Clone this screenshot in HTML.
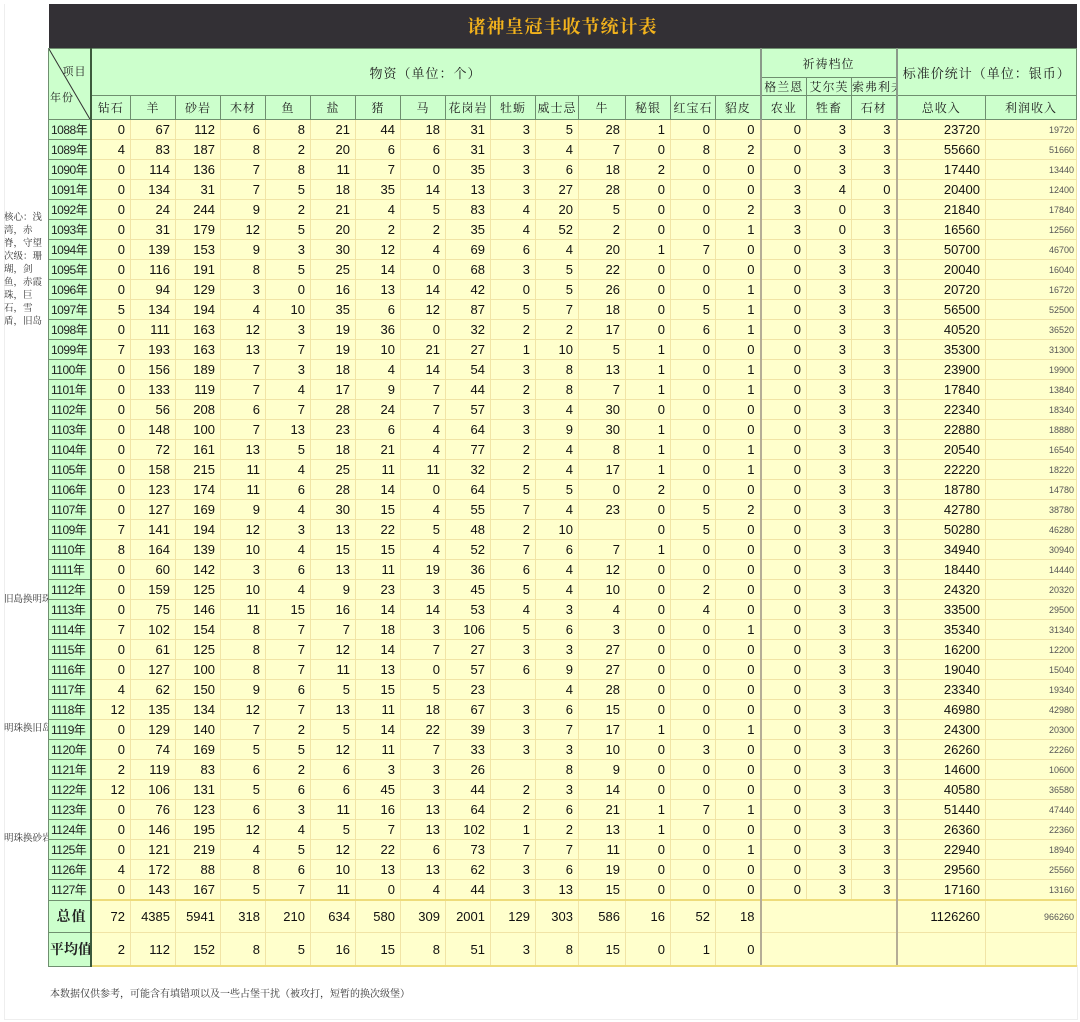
<!DOCTYPE html>
<html><head><meta charset="utf-8">
<style>
html,body{margin:0;padding:0;background:#fff;width:1080px;height:1022px;overflow:hidden;position:relative}
.note{position:absolute;left:4px;width:43px;font:9.5px/13px "Liberation Serif","Noto Serif CJK SC",serif;color:#333;white-space:normal;z-index:0}
.nl{white-space:nowrap;width:auto}
table{position:absolute;left:48px;top:4px;border-collapse:collapse;table-layout:fixed;width:1028px;z-index:1;font:13px "Liberation Sans","Noto Sans CJK SC",sans-serif;color:#111}
td{background:#ffffcc;border:1px solid #f1e4a6;text-align:right;padding:0 5px 0 0;height:19px;overflow:hidden;white-space:nowrap}
th{background:#ccffcc;border:1px solid #6f8f6f;font:12px "Liberation Serif","Noto Serif CJK SC",serif;letter-spacing:1px;color:#222;padding:0;overflow:hidden;white-space:nowrap}
th.y{font:12px "Liberation Sans","Noto Sans CJK SC",sans-serif;text-align:left;padding-left:2px;letter-spacing:-0.5px;border-right:2px solid #3c5a3c}
.t{background:#333035;color:#f2b21c;font:bold 18px "Liberation Serif","Noto Serif CJK SC",serif;height:44px;border:none;letter-spacing:1px}
td.s{font-size:9px;color:#555;padding-right:2px}
.bl{border-left:2px solid #b5ad96}
tr.sum td{height:31px;border-top:2px solid #eedc7a}
tr.sum th{font:bold 14px "Liberation Serif","Noto Serif CJK SC",serif;text-align:right;padding-right:3px;border-right:2px solid #3c5a3c}
tr.avg td{height:32px;border-bottom:2px solid #eedc7a}
.foot{position:absolute;left:50px;top:985px;font:10px "Liberation Serif","Noto Serif CJK SC",serif;color:#333}
.frame{position:absolute;left:4px;top:965px;width:1072px;height:54px;border:1px solid #eee;border-top:none}
.lcol{position:absolute;left:4px;top:4px;width:44px;height:961px;border-left:1px solid #eee}
</style></head><body>
<div class="lcol"></div>
<div class="frame"></div>
<div class="note" style="top:212px">核心：浅湾，赤脊，守望 次级：珊瑚，剑鱼，赤霞珠，巨石，雪盾，旧岛</div>
<div class="note nl" style="top:594px">旧島换明珠</div>
<div class="note nl" style="top:723px">明珠换旧岛</div>
<div class="note nl" style="top:833px">明珠换砂岩</div>
<table>
<colgroup><col style="width:42px"><col style="width:40px"><col style="width:45px"><col style="width:45px"><col style="width:45px"><col style="width:45px"><col style="width:45px"><col style="width:45px"><col style="width:45px"><col style="width:45px"><col style="width:45px"><col style="width:43px"><col style="width:47px"><col style="width:45px"><col style="width:45px"><col style="width:45px"><col style="width:46px"><col style="width:45px"><col style="width:45px"><col style="width:89px"><col style="width:91px"></colgroup>
<tr><th colspan="21" class="t">诸神皇冠丰收节统计表</th></tr>
<tr style="height:29px"><th rowspan="3" style="position:relative;border-right:2px solid #3c5a3c;vertical-align:top"><svg width="42" height="72" style="position:absolute;left:0;top:0"><line x1="0" y1="0" x2="42" y2="72" stroke="#333" stroke-width="1"/></svg><span style="position:absolute;right:3px;top:14px;font-size:11px">项目</span><span style="position:absolute;left:1px;top:40px;font-size:11px">年份</span></th><th colspan="15" rowspan="2" style="font-size:13px">物资（单位：个）</th><th colspan="3" style="border-left:2px solid #8a9a8a">祈祷档位</th><th colspan="2" rowspan="2" style="font-size:13px;border-left:2px solid #8a9a8a">标准价统计（单位：银币）</th></tr>
<tr style="height:18px"><th style="border-left:2px solid #8a9a8a">格兰恩</th><th>艾尔芙</th><th style="text-align:left">索弗利夫</th></tr>
<tr style="height:24px"><th>钻石</th><th>羊</th><th>砂岩</th><th>木材</th><th>鱼</th><th>盐</th><th>猪</th><th>马</th><th>花岗岩</th><th>牡蛎</th><th>威士忌</th><th>牛</th><th>秘银</th><th>红宝石</th><th>貂皮</th><th style="border-left:2px solid #8a9a8a">农业</th><th>牲畜</th><th>石材</th><th style="border-left:2px solid #8a9a8a">总收入</th><th>利润收入</th></tr>
<tr><th class="y">1088年</th><td>0<td>67<td>112<td>6<td>8<td>21<td>44<td>18<td>31<td>3<td>5<td>28<td>1<td>0<td>0<td class="bl">0<td>3<td>3<td class="bl">23720<td class="s">19720</tr>
<tr><th class="y">1089年</th><td>4<td>83<td>187<td>8<td>2<td>20<td>6<td>6<td>31<td>3<td>4<td>7<td>0<td>8<td>2<td class="bl">0<td>3<td>3<td class="bl">55660<td class="s">51660</tr>
<tr><th class="y">1090年</th><td>0<td>114<td>136<td>7<td>8<td>11<td>7<td>0<td>35<td>3<td>6<td>18<td>2<td>0<td>0<td class="bl">0<td>3<td>3<td class="bl">17440<td class="s">13440</tr>
<tr><th class="y">1091年</th><td>0<td>134<td>31<td>7<td>5<td>18<td>35<td>14<td>13<td>3<td>27<td>28<td>0<td>0<td>0<td class="bl">3<td>4<td>0<td class="bl">20400<td class="s">12400</tr>
<tr><th class="y">1092年</th><td>0<td>24<td>244<td>9<td>2<td>21<td>4<td>5<td>83<td>4<td>20<td>5<td>0<td>0<td>2<td class="bl">3<td>0<td>3<td class="bl">21840<td class="s">17840</tr>
<tr><th class="y">1093年</th><td>0<td>31<td>179<td>12<td>5<td>20<td>2<td>2<td>35<td>4<td>52<td>2<td>0<td>0<td>1<td class="bl">3<td>0<td>3<td class="bl">16560<td class="s">12560</tr>
<tr><th class="y">1094年</th><td>0<td>139<td>153<td>9<td>3<td>30<td>12<td>4<td>69<td>6<td>4<td>20<td>1<td>7<td>0<td class="bl">0<td>3<td>3<td class="bl">50700<td class="s">46700</tr>
<tr><th class="y">1095年</th><td>0<td>116<td>191<td>8<td>5<td>25<td>14<td>0<td>68<td>3<td>5<td>22<td>0<td>0<td>0<td class="bl">0<td>3<td>3<td class="bl">20040<td class="s">16040</tr>
<tr><th class="y">1096年</th><td>0<td>94<td>129<td>3<td>0<td>16<td>13<td>14<td>42<td>0<td>5<td>26<td>0<td>0<td>1<td class="bl">0<td>3<td>3<td class="bl">20720<td class="s">16720</tr>
<tr><th class="y">1097年</th><td>5<td>134<td>194<td>4<td>10<td>35<td>6<td>12<td>87<td>5<td>7<td>18<td>0<td>5<td>1<td class="bl">0<td>3<td>3<td class="bl">56500<td class="s">52500</tr>
<tr><th class="y">1098年</th><td>0<td>111<td>163<td>12<td>3<td>19<td>36<td>0<td>32<td>2<td>2<td>17<td>0<td>6<td>1<td class="bl">0<td>3<td>3<td class="bl">40520<td class="s">36520</tr>
<tr><th class="y">1099年</th><td>7<td>193<td>163<td>13<td>7<td>19<td>10<td>21<td>27<td>1<td>10<td>5<td>1<td>0<td>0<td class="bl">0<td>3<td>3<td class="bl">35300<td class="s">31300</tr>
<tr><th class="y">1100年</th><td>0<td>156<td>189<td>7<td>3<td>18<td>4<td>14<td>54<td>3<td>8<td>13<td>1<td>0<td>1<td class="bl">0<td>3<td>3<td class="bl">23900<td class="s">19900</tr>
<tr><th class="y">1101年</th><td>0<td>133<td>119<td>7<td>4<td>17<td>9<td>7<td>44<td>2<td>8<td>7<td>1<td>0<td>1<td class="bl">0<td>3<td>3<td class="bl">17840<td class="s">13840</tr>
<tr><th class="y">1102年</th><td>0<td>56<td>208<td>6<td>7<td>28<td>24<td>7<td>57<td>3<td>4<td>30<td>0<td>0<td>0<td class="bl">0<td>3<td>3<td class="bl">22340<td class="s">18340</tr>
<tr><th class="y">1103年</th><td>0<td>148<td>100<td>7<td>13<td>23<td>6<td>4<td>64<td>3<td>9<td>30<td>1<td>0<td>0<td class="bl">0<td>3<td>3<td class="bl">22880<td class="s">18880</tr>
<tr><th class="y">1104年</th><td>0<td>72<td>161<td>13<td>5<td>18<td>21<td>4<td>77<td>2<td>4<td>8<td>1<td>0<td>1<td class="bl">0<td>3<td>3<td class="bl">20540<td class="s">16540</tr>
<tr><th class="y">1105年</th><td>0<td>158<td>215<td>11<td>4<td>25<td>11<td>11<td>32<td>2<td>4<td>17<td>1<td>0<td>1<td class="bl">0<td>3<td>3<td class="bl">22220<td class="s">18220</tr>
<tr><th class="y">1106年</th><td>0<td>123<td>174<td>11<td>6<td>28<td>14<td>0<td>64<td>5<td>5<td>0<td>2<td>0<td>0<td class="bl">0<td>3<td>3<td class="bl">18780<td class="s">14780</tr>
<tr><th class="y">1107年</th><td>0<td>127<td>169<td>9<td>4<td>30<td>15<td>4<td>55<td>7<td>4<td>23<td>0<td>5<td>2<td class="bl">0<td>3<td>3<td class="bl">42780<td class="s">38780</tr>
<tr><th class="y">1109年</th><td>7<td>141<td>194<td>12<td>3<td>13<td>22<td>5<td>48<td>2<td>10<td><td>0<td>5<td>0<td class="bl">0<td>3<td>3<td class="bl">50280<td class="s">46280</tr>
<tr><th class="y">1110年</th><td>8<td>164<td>139<td>10<td>4<td>15<td>15<td>4<td>52<td>7<td>6<td>7<td>1<td>0<td>0<td class="bl">0<td>3<td>3<td class="bl">34940<td class="s">30940</tr>
<tr><th class="y">1111年</th><td>0<td>60<td>142<td>3<td>6<td>13<td>11<td>19<td>36<td>6<td>4<td>12<td>0<td>0<td>0<td class="bl">0<td>3<td>3<td class="bl">18440<td class="s">14440</tr>
<tr><th class="y">1112年</th><td>0<td>159<td>125<td>10<td>4<td>9<td>23<td>3<td>45<td>5<td>4<td>10<td>0<td>2<td>0<td class="bl">0<td>3<td>3<td class="bl">24320<td class="s">20320</tr>
<tr><th class="y">1113年</th><td>0<td>75<td>146<td>11<td>15<td>16<td>14<td>14<td>53<td>4<td>3<td>4<td>0<td>4<td>0<td class="bl">0<td>3<td>3<td class="bl">33500<td class="s">29500</tr>
<tr><th class="y">1114年</th><td>7<td>102<td>154<td>8<td>7<td>7<td>18<td>3<td>106<td>5<td>6<td>3<td>0<td>0<td>1<td class="bl">0<td>3<td>3<td class="bl">35340<td class="s">31340</tr>
<tr><th class="y">1115年</th><td>0<td>61<td>125<td>8<td>7<td>12<td>14<td>7<td>27<td>3<td>3<td>27<td>0<td>0<td>0<td class="bl">0<td>3<td>3<td class="bl">16200<td class="s">12200</tr>
<tr><th class="y">1116年</th><td>0<td>127<td>100<td>8<td>7<td>11<td>13<td>0<td>57<td>6<td>9<td>27<td>0<td>0<td>0<td class="bl">0<td>3<td>3<td class="bl">19040<td class="s">15040</tr>
<tr><th class="y">1117年</th><td>4<td>62<td>150<td>9<td>6<td>5<td>15<td>5<td>23<td><td>4<td>28<td>0<td>0<td>0<td class="bl">0<td>3<td>3<td class="bl">23340<td class="s">19340</tr>
<tr><th class="y">1118年</th><td>12<td>135<td>134<td>12<td>7<td>13<td>11<td>18<td>67<td>3<td>6<td>15<td>0<td>0<td>0<td class="bl">0<td>3<td>3<td class="bl">46980<td class="s">42980</tr>
<tr><th class="y">1119年</th><td>0<td>129<td>140<td>7<td>2<td>5<td>14<td>22<td>39<td>3<td>7<td>17<td>1<td>0<td>1<td class="bl">0<td>3<td>3<td class="bl">24300<td class="s">20300</tr>
<tr><th class="y">1120年</th><td>0<td>74<td>169<td>5<td>5<td>12<td>11<td>7<td>33<td>3<td>3<td>10<td>0<td>3<td>0<td class="bl">0<td>3<td>3<td class="bl">26260<td class="s">22260</tr>
<tr><th class="y">1121年</th><td>2<td>119<td>83<td>6<td>2<td>6<td>3<td>3<td>26<td><td>8<td>9<td>0<td>0<td>0<td class="bl">0<td>3<td>3<td class="bl">14600<td class="s">10600</tr>
<tr><th class="y">1122年</th><td>12<td>106<td>131<td>5<td>6<td>6<td>45<td>3<td>44<td>2<td>3<td>14<td>0<td>0<td>0<td class="bl">0<td>3<td>3<td class="bl">40580<td class="s">36580</tr>
<tr><th class="y">1123年</th><td>0<td>76<td>123<td>6<td>3<td>11<td>16<td>13<td>64<td>2<td>6<td>21<td>1<td>7<td>1<td class="bl">0<td>3<td>3<td class="bl">51440<td class="s">47440</tr>
<tr><th class="y">1124年</th><td>0<td>146<td>195<td>12<td>4<td>5<td>7<td>13<td>102<td>1<td>2<td>13<td>1<td>0<td>0<td class="bl">0<td>3<td>3<td class="bl">26360<td class="s">22360</tr>
<tr><th class="y">1125年</th><td>0<td>121<td>219<td>4<td>5<td>12<td>22<td>6<td>73<td>7<td>7<td>11<td>0<td>0<td>1<td class="bl">0<td>3<td>3<td class="bl">22940<td class="s">18940</tr>
<tr><th class="y">1126年</th><td>4<td>172<td>88<td>8<td>6<td>10<td>13<td>13<td>62<td>3<td>6<td>19<td>0<td>0<td>0<td class="bl">0<td>3<td>3<td class="bl">29560<td class="s">25560</tr>
<tr><th class="y">1127年</th><td>0<td>143<td>167<td>5<td>7<td>11<td>0<td>4<td>44<td>3<td>13<td>15<td>0<td>0<td>0<td class="bl">0<td>3<td>3<td class="bl">17160<td class="s">13160</tr>
<tr class="sum"><th>总值</th><td>72<td>4385<td>5941<td>318<td>210<td>634<td>580<td>309<td>2001<td>129<td>303<td>586<td>16<td>52<td>18<td class="bl" colspan="3"><td class="bl">1126260<td class="s">966260</tr>
<tr class="avg"><th style="font:bold 14px 'Liberation Serif','Noto Serif CJK SC',serif;letter-spacing:0;text-align:left;padding-left:1px;border-right:2px solid #3c5a3c">平均值</th><td>2<td>112<td>152<td>8<td>5<td>16<td>15<td>8<td>51<td>3<td>8<td>15<td>0<td>1<td>0<td class="bl" colspan="3"><td class="bl"><td></tr>
</table>
<div class="foot">本数据仅供参考，可能含有填错项以及一些占堡干扰（被攻打，短暂的换次级堡）</div>
</body></html>
